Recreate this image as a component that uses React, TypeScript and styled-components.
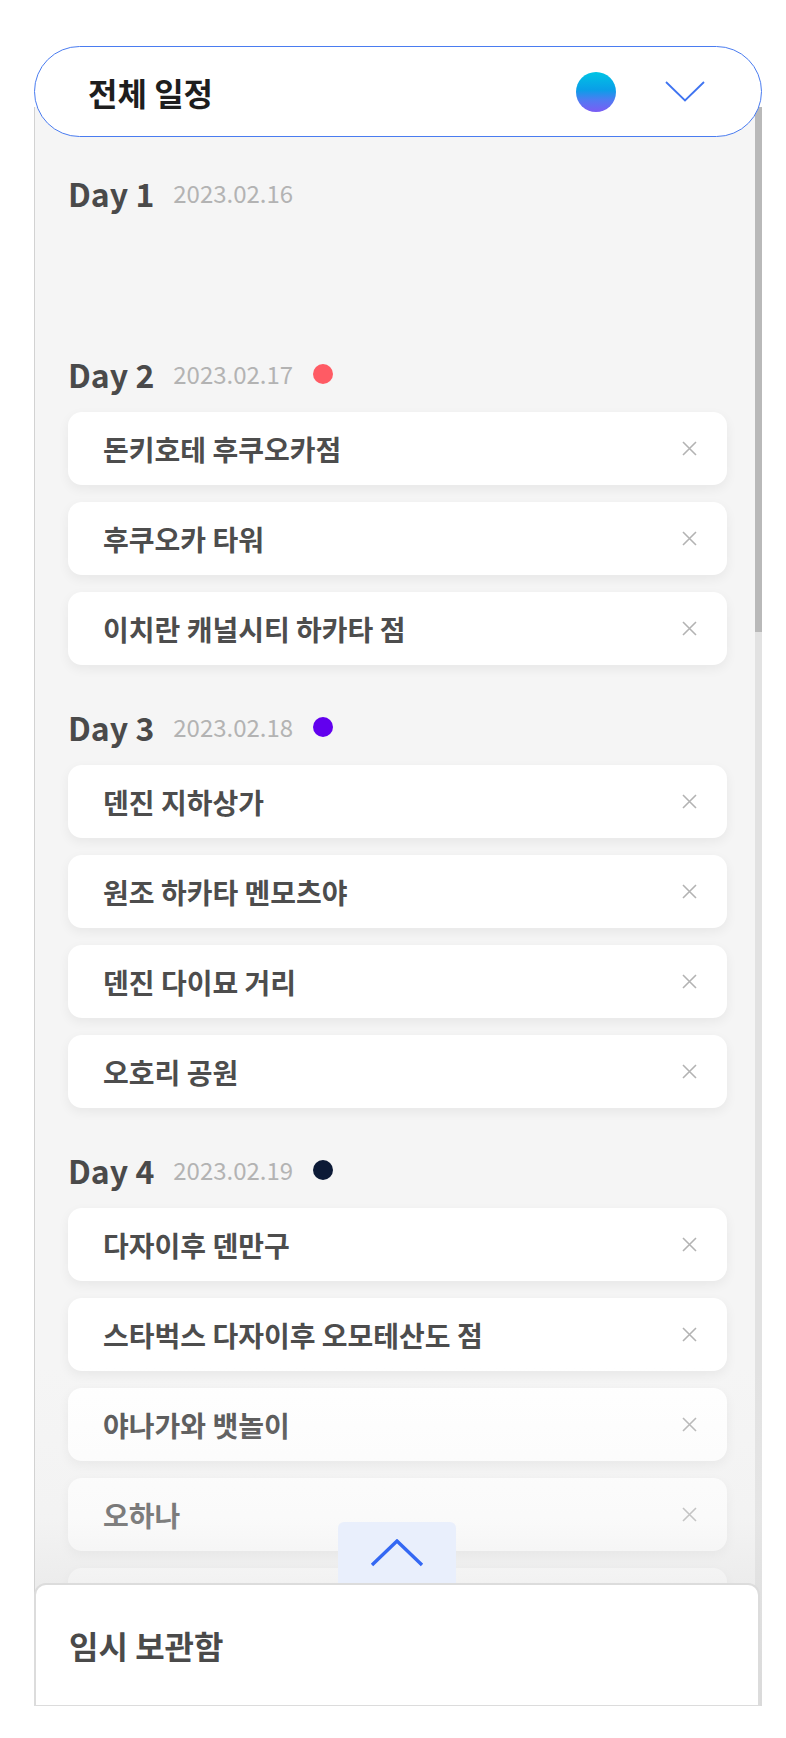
import React from "react";
import styled, { createGlobalStyle } from "styled-components";

const GlobalStyle = createGlobalStyle`
  html, body {
    margin: 0;
    padding: 0;
    background: #ffffff;
  }
  body {
    font-family: "Noto Sans CJK KR", "Noto Sans", sans-serif;
    -webkit-font-smoothing: antialiased;
  }
  * { box-sizing: border-box; }
`;

type Day = {
  label: string;
  date: string;
  dot?: string;
  places: string[];
};

const days: Day[] = [
  { label: "Day 1", date: "2023.02.16", places: [] },
  {
    label: "Day 2",
    date: "2023.02.17",
    dot: "#ff5b64",
    places: ["돈키호테 후쿠오카점", "후쿠오카 타워", "이치란 캐널시티 하카타 점"],
  },
  {
    label: "Day 3",
    date: "2023.02.18",
    dot: "#6200ee",
    places: ["덴진 지하상가", "원조 하카타 멘모츠야", "덴진 다이묘 거리", "오호리 공원"],
  },
  {
    label: "Day 4",
    date: "2023.02.19",
    dot: "#0c1a36",
    places: ["다자이후 덴만구", "스타벅스 다자이후 오모테산도 점", "야나가와 뱃놀이", "오하나", "캐널시티 하카타"],
  },
];

const Frame = styled.div`
  position: relative;
  width: 728px;
  height: 1660px;
  margin: 46px 0 0 34px;
  display: flex;
  flex-direction: column;
`;

const Header = styled.header`
  position: relative;
  z-index: 2;
  height: 91px;
  flex: none;
  display: flex;
  align-items: center;
  padding: 0 56px 0 53px;
  background: #ffffff;
  border: 1px solid #4a7cf0;
  border-radius: 46px;
`;

const HeaderTitle = styled.h1`
  flex: 1;
  margin: 0;
  font-size: 32px;
  font-weight: 700;
  color: #1e1e1e;
  letter-spacing: 0;
`;

const GradientDot = styled.span`
  width: 40px;
  height: 40px;
  border-radius: 50%;
  background: linear-gradient(180deg, #00c4e4 0%, #0a9ee8 45%, #4f7bf2 70%, #7b5cf4 100%);
  margin-right: 49px;
`;

const Panel = styled.section`
  position: relative;
  flex: 1;
  margin-top: -30px;
  display: flex;
  background: #f5f5f5;
  border-left: 1px solid #d2d2d2;
  overflow: hidden;
`;

const List = styled.div`
  flex: 1;
  padding: 68px 28px 0 33px;
  display: flex;
  flex-direction: column;
  gap: 44px;
`;

const Section = styled.div`
  display: flex;
  flex-direction: column;
`;

const DayHeader = styled.div`
  height: 40px;
  display: flex;
  align-items: center;
  margin-bottom: 16px;
  padding: 0 0 5px 0;
`;

const DayLabel = styled.span`
  font-size: 32px;
  font-weight: 700;
  color: #4a4a4a;
  margin-right: 19px;
`;

const DayDate = styled.span`
  font-size: 24px;
  font-weight: 400;
  color: #b3b3b3;
`;

const DayDot = styled.span<{ $color: string }>`
  width: 20px;
  height: 20px;
  border-radius: 50%;
  background: ${(p) => p.$color};
  margin-left: 20px;
`;

const Cards = styled.div`
  display: flex;
  flex-direction: column;
  gap: 17px;
  min-height: 81px;
`;

const Card = styled.div`
  height: 73px;
  display: flex;
  align-items: center;
  justify-content: space-between;
  padding: 0 30px 0 35px;
  background: #ffffff;
  border-radius: 14px;
  box-shadow: 0 4px 12px rgba(0, 0, 0, 0.06);
`;

const CardText = styled.span`
  font-size: 28px;
  font-weight: 700;
  color: #4d4d4d;
`;

const RemoveButton = styled.button`
  width: 15px;
  height: 15px;
  padding: 0;
  border: none;
  background: none;
  display: flex;
  cursor: pointer;
`;

const ScrollTrack = styled.div`
  width: 7px;
  flex: none;
  background: #e2e2e2;
  display: flex;
  flex-direction: column;
`;

const ScrollThumb = styled.div`
  height: 525px;
  background: #b9b9b9;
`;

const Fade = styled.div`
  position: absolute;
  left: 0;
  right: 0;
  bottom: 0;
  height: 340px;
  pointer-events: none;
  background: linear-gradient(
    180deg,
    rgba(245, 245, 245, 0) 0%,
    rgba(238, 238, 238, 0.3) 45%,
    rgba(214, 214, 214, 0.7) 100%
  );
`;

const Drawer = styled.div`
  position: absolute;
  left: 0;
  bottom: -1px;
  z-index: 3;
  width: 726px;
  height: 124px;
  background: #ffffff;
  border: 2px solid #dcdcdc;
  border-radius: 12px 12px 0 0;
  display: flex;
  align-items: center;
  padding-left: 33px;
`;

const DrawerTitle = styled.h2`
  margin: 0;
  font-size: 32px;
  font-weight: 700;
  color: #4a4a4a;
`;

const DrawerTab = styled.button`
  position: absolute;
  top: -63px;
  left: 50%;
  transform: translateX(-50%);
  width: 118px;
  height: 61px;
  border: none;
  padding: 0;
  background: #e9effc;
  border-radius: 6px 6px 0 0;
  display: flex;
  align-items: center;
  justify-content: center;
  cursor: pointer;
`;

const CloseIcon = () => (
  <svg width="15" height="15" viewBox="0 0 15 15">
    <path d="M1 1 L14 14 M14 1 L1 14" stroke="#b3b3b3" strokeWidth="1.6" fill="none" />
  </svg>
);

const ChevronDown = () => (
  <svg width="40" height="21" viewBox="0 0 40 21">
    <polyline points="1,1 20,19.5 39,1" stroke="#3f74f1" strokeWidth="1.8" fill="none" />
  </svg>
);

const ChevronUp = () => (
  <svg width="54" height="28" viewBox="0 0 54 28">
    <polyline points="2,26 27,2 52,26" stroke="#3468f3" strokeWidth="3.4" fill="none" />
  </svg>
);

export default function App() {
  return (
    <>
      <GlobalStyle />
      <Frame>
        <Header>
          <HeaderTitle>전체 일정</HeaderTitle>
          <GradientDot />
          <ChevronDown />
        </Header>
        <Panel>
          <List>
            {days.map((d) => (
              <Section key={d.label}>
                <DayHeader>
                  <DayLabel>{d.label}</DayLabel>
                  <DayDate>{d.date}</DayDate>
                  {d.dot && <DayDot $color={d.dot} />}
                </DayHeader>
                <Cards>
                  {d.places.map((p) => (
                    <Card key={p}>
                      <CardText>{p}</CardText>
                      <RemoveButton aria-label="삭제">
                        <CloseIcon />
                      </RemoveButton>
                    </Card>
                  ))}
                </Cards>
              </Section>
            ))}
          </List>
          <ScrollTrack>
            <ScrollThumb />
          </ScrollTrack>
          <Fade />
        </Panel>
        <Drawer>
          <DrawerTab aria-label="열기">
            <ChevronUp />
          </DrawerTab>
          <DrawerTitle>임시 보관함</DrawerTitle>
        </Drawer>
      </Frame>
    </>
  );
}
